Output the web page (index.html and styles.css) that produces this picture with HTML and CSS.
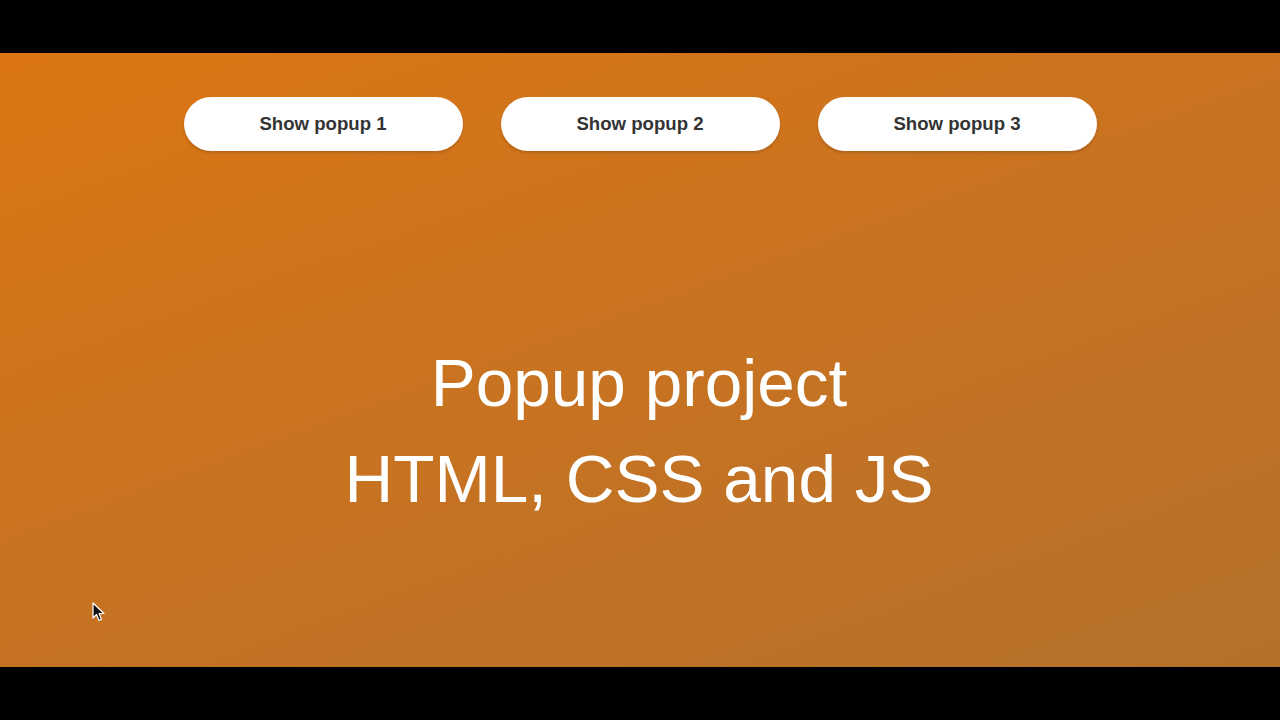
FILE: index.html
```html
<!DOCTYPE html>
<html>
<head>
<meta charset="utf-8">
<link rel="stylesheet" href="styles.css">
</head>
<body>
<div class="frame">
  <main class="stage">
    <div class="buttons">
      <button class="btn">Show popup 1</button>
      <button class="btn">Show popup 2</button>
      <button class="btn">Show popup 3</button>
    </div>
    <h1 class="title">Popup project<br>HTML, CSS and JS</h1>
    <svg class="cursor" width="14" height="20" viewBox="0 0 14 20">
      <path d="M1 1 L1 16 L4.5 12.5 L7 18.5 L9.5 17.5 L7 11.5 L12 11.5 Z" fill="#111" stroke="#fff" stroke-width="1.2" stroke-linejoin="round"/>
    </svg>
  </main>
</div>
</body>
</html>
```
FILE: styles.css
```css
html, body {
  margin: 0;
  padding: 0;
  background: #000;
}
.frame {
  width: 1280px;
  height: 720px;
  padding-top: 53px;
  box-sizing: border-box;
}
.stage {
  position: relative;
  height: 614px;
  background: linear-gradient(160deg, #dc7613 0%, #c97320 45%, #b4702b 100%);
  display: flex;
  flex-direction: column;
  align-items: center;
  padding-top: 44px;
  box-sizing: border-box;
  font-family: "Liberation Sans", Arial, sans-serif;
}
.buttons {
  display: flex;
  gap: 38px;
}
.btn {
  width: 279px;
  height: 54px;
  border: none;
  border-radius: 27px;
  background: #fff;
  color: #333;
  font-family: "Liberation Sans", Arial, sans-serif;
  font-weight: bold;
  font-size: 18.6px;
  box-shadow: 0 2px 3px rgba(0,0,0,0.15);
  padding: 0;
}
.title {
  margin: 184px 0 0;
  color: #fff;
  font-weight: normal;
  font-size: 67.5px;
  line-height: 96px;
  text-align: center;
  margin-left: -2px;
}
.cursor {
  position: absolute;
  left: 92px;
  top: 549px;
}
```
